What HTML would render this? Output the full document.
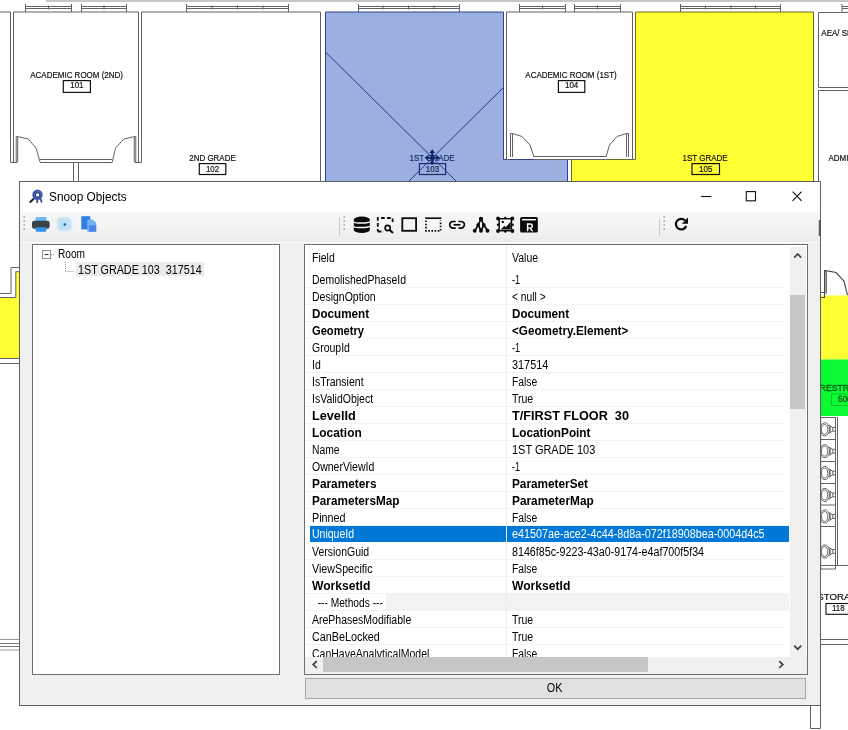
<!DOCTYPE html>
<html><head><meta charset="utf-8"><title>Snoop Objects</title>
<style>
html,body{margin:0;padding:0;background:#fff;}
body{width:848px;height:730px;position:relative;overflow:hidden;font-family:"Liberation Sans",sans-serif;}
#bg{position:absolute;left:0;top:0;will-change:transform;}
#dlg{position:absolute;left:19px;top:181px;width:800px;height:523px;border:1px solid #606060;background:#f0f0f0;}
#title{position:absolute;left:0;top:0;width:800px;height:30px;background:#fff;}
#title .t{position:absolute;left:28.6px;top:8.4px;font-size:12.6px;color:#000;white-space:nowrap;transform:scaleX(.94);transform-origin:0 0;}
#tb{position:absolute;left:0;top:29.8px;width:800px;height:30.6px;background:linear-gradient(#f6f6f6,#f4f4f4 45%,#ebebeb);border-bottom:1px solid #fbfbfb;}
#tree{position:absolute;left:12px;top:62px;width:246px;height:429px;border:1px solid #6f6f6f;background:#fff;}
#grid{position:absolute;left:284px;top:62px;width:502px;height:429px;border:1px solid #6f6f6f;background:#fff;overflow:hidden;}
.r{position:absolute;left:0;width:481px;height:16px;border-bottom:1px solid #f4f4f4;font-size:12px;color:#000;white-space:nowrap;}
.r span{position:absolute;top:0.6px;height:16px;line-height:16px;}
.r i{font-style:normal;display:inline-block;transform:scaleX(.875);transform-origin:0 50%;}
.r.b i{font-weight:bold;transform:scaleX(.975);}
.r .f{left:6.5px;} .r .v{left:206.7px;}
.r.sel{background:#0078d7;color:#fff;left:5px;width:478.6px;margin-top:-0.4px;border-bottom:0;}
.r.m b{position:absolute;left:80.5px;top:-0.6px;width:403px;height:17.4px;background:#f2f2f2;}
.r.sel .f{left:1.5px} .r.sel .v{left:201.7px}
#hdr{position:absolute;left:0;top:0;width:485px;height:25px;font-size:12px;}
#hdr span{position:absolute;top:5.2px;line-height:16px;}
#hdr i{font-style:normal;display:inline-block;transform:scaleX(.875);transform-origin:0 50%;}
#colsep{position:absolute;left:201px;top:0;width:1px;height:412px;background:#ececec;}
#vs{position:absolute;left:485px;top:1.5px;width:16px;height:410.5px;background:#f0f0f0;}
#vs .th{position:absolute;left:0.4px;top:48.3px;width:14.6px;height:114px;background:#c6c6c6;}
#hs{position:absolute;left:0;top:412px;width:502px;height:17px;background:#f0f0f0;}
#hs .th{position:absolute;left:18px;top:0.4px;width:325px;height:14.8px;background:#c6c6c6;}
#ok{position:absolute;left:285.1px;top:496.3px;width:499px;height:18.5px;border:1px solid #a8a8a8;background:#e1e1e1;font-size:12px;text-align:center;line-height:19px;}
#ok i{font-style:normal;display:inline-block;transform:scaleX(.9);position:relative;left:-1.4px;top:-0.3px}
svg.ic{position:absolute;overflow:visible;}
#tree .t{position:absolute;font-size:12px;white-space:nowrap;line-height:16px;}
#tree .t i{font-style:normal;display:inline-block;transform:scaleX(.885);transform-origin:0 50%;}
</style></head><body>
<svg id="bg" width="848" height="730" viewBox="0 0 848 730"><rect x="0" y="0" width="848" height="730" fill="#fff"/>
<rect x="46" y="0" width="802" height="2" fill="#c6c6c6"/>
<path d="M325.5 12H503.5V159.5H567.5V182H325.5Z" fill="#9bafe0" stroke="#2f4290" stroke-width="1"/>
<path d="M635.5 12H813.5V182H571.5V159.5H635.5Z" fill="#ffff33" stroke="#6b6b20" stroke-width="1"/>
<path d="M0 297.5H15.8V271.7H20V358H0Z" fill="#ffff33"/>
<rect x="820" y="295.5" width="28" height="64" fill="#ffff33"/>
<rect x="820" y="359.5" width="28" height="56.5" fill="#0cfa34"/>
<g fill="none" stroke="#626262" stroke-width="1">
<path d="M25.5 4V12M71.5 4V12M25.5 6.5H71.5M25.5 8.5H71.5M48.5 5.5V9.5" />
<path d="M81.5 4V12M126.5 4V12M81.5 6.5H126.5M81.5 8.5H126.5M104 5.5V9.5" />
<path d="M186.5 4V12M288.5 4V12M186.5 6.5H288.5M186.5 8.5H288.5M212 5.5V9.5M237.5 5.5V9.5M263 5.5V9.5" />
<path d="M358.5 4V12M459.5 4V12M358.5 6.5H459.5M358.5 8.5H459.5M383 5.5V9.5M408.5 5.5V9.5M434 5.5V9.5" />
<path d="M519.5 4V12M565.5 4V12M519.5 6.5H565.5M519.5 8.5H565.5M542.5 5.5V9.5" />
<path d="M574.5 4V12M620.5 4V12M574.5 6.5H620.5M574.5 8.5H620.5M597.5 5.5V9.5" />
<path d="M680.5 4V12M780.5 4V12M680.5 6.5H780.5M680.5 8.5H780.5M705.5 5.5V9.5M731 5.5V9.5M755.5 5.5V9.5" />
<path d="M842 4V12M860 4V12M842 6.5H860M842 8.5H860" />
<path d="M0 12H10.5V162.5H17"/>
<path d="M17 162.5H13.5V12H138.5V162.5H135"/>
<path d="M16.2 162.3V136.6H17.7V162.3"/>
<path d="M17.7 136.6L28.3 139L36.2 148.3L40 162"/>
<path d="M134.3 162.3V136.6H135.8V162.3"/>
<path d="M134.3 136.6L123.6 139.2L115.5 148.3L112.3 162"/>
<path d="M40 159.5H112.3M40 162.5H112.3M73.5 162.5V182M78.5 162.5V182"/>
<path d="M135 162.5H141.5V12H320.5V182"/>
<path d="M325.5 52L457 182M504 87L408 182" stroke="#1f3a93"/>
<path d="M510 159.5H506.5V12H632.5V159.5H629"/>
<path d="M534 156.5H606M534 159.5H606" />
<path d="M510.5 157V133.5H512.5V157M512.5 133.5L522 136.5L530 145L534 157"/>
<path d="M628.5 157V133.5H626.5V157M626.5 133.5L617 136.5L609.5 145L606 157"/>
<path d="M848 12.5H818.5V87.5H848M848 90.5H818.5V182"/>
<path d="M824.6 293.5V270.6H826.2V293.5M826.2 270.6L836 272.5L844 281L847.5 295M820.5 292.5H824.5V297.5H820.5" stroke="#4a4a4a" stroke-width="1.15"/>
<path d="M820.5 416.5V569M835.5 417V569M837.5 417V565.5M820.5 417.5H835.5M820.5 439.5H835.5M820.5 461.5H835.5M820.5 483.5H835.5M820.5 505H835.5M820.5 526.5H835.5M820.5 565.5H848M820.5 569H835.5"/>
<path d="M820.5 416.5V569" stroke="#333" stroke-width="1.3"/>
<g stroke="#555" stroke-width="0.9"><ellipse cx="824.8" cy="429.3" rx="4.7" ry="6.6"/><ellipse cx="824.6" cy="429.3" rx="3.2" ry="5"/><path d="M828.6 425.0L832.8 427.6M828.6 433.6L832.8 431.0M830.2 426.1V432.5M832.8 427.40000000000003H835.5M832.8 431.2H835.5M832.8 427.40000000000003V431.2"/></g>
<g stroke="#555" stroke-width="0.9"><ellipse cx="824.8" cy="451.2" rx="4.7" ry="6.6"/><ellipse cx="824.6" cy="451.2" rx="3.2" ry="5"/><path d="M828.6 446.9L832.8 449.5M828.6 455.5L832.8 452.9M830.2 448.0V454.4M832.8 449.3H835.5M832.8 453.09999999999997H835.5M832.8 449.3V453.09999999999997"/></g>
<g stroke="#555" stroke-width="0.9"><ellipse cx="824.8" cy="473" rx="4.7" ry="6.6"/><ellipse cx="824.6" cy="473" rx="3.2" ry="5"/><path d="M828.6 468.7L832.8 471.3M828.6 477.3L832.8 474.7M830.2 469.8V476.2M832.8 471.1H835.5M832.8 474.9H835.5M832.8 471.1V474.9"/></g>
<g stroke="#555" stroke-width="0.9"><ellipse cx="824.8" cy="494.9" rx="4.7" ry="6.6"/><ellipse cx="824.6" cy="494.9" rx="3.2" ry="5"/><path d="M828.6 490.59999999999997L832.8 493.2M828.6 499.2L832.8 496.59999999999997M830.2 491.7V498.09999999999997M832.8 493.0H835.5M832.8 496.79999999999995H835.5M832.8 493.0V496.79999999999995"/></g>
<g stroke="#555" stroke-width="0.9"><ellipse cx="824.8" cy="516.5" rx="4.7" ry="6.6"/><ellipse cx="824.6" cy="516.5" rx="3.2" ry="5"/><path d="M828.6 512.2L832.8 514.8M828.6 520.8L832.8 518.2M830.2 513.3V519.7M832.8 514.6H835.5M832.8 518.4H835.5M832.8 514.6V518.4"/></g>
<g stroke="#555" stroke-width="0.9"><ellipse cx="824.8" cy="551.5" rx="4.7" ry="6.6"/><ellipse cx="824.6" cy="551.5" rx="3.2" ry="5"/><path d="M828.6 547.2L832.8 549.8M828.6 555.8L832.8 553.2M830.2 548.3V554.7M832.8 549.6H835.5M832.8 553.4H835.5M832.8 549.6V553.4"/></g>
<path d="M820.5 569V705M820.5 639.5H848M820.5 644.5H848"/>
<path d="M810.5 705V728.5H820.5V705"/>
<path d="M0 639.5H19.5M0 650H19.5" stroke="#9a9a9a"/>
<path d="M0 643.5H19.5M0 646.5H19.5" stroke="#7a7a7a"/>
<path d="M20 267.5H11V293.5H0M20 271.7H15.8V297.5H0M0 358.5H20M0 363.5H20"/>
</g>
<g font-family="Liberation Sans, sans-serif" fill="#111" stroke="#111" stroke-width="0.18">
<text transform="translate(76.6 77.8) scale(.952 1)" font-size="8.4" text-anchor="middle">ACADEMIC ROOM (2ND)</text>
<rect x="63.3" y="80.6" width="27.10000000000001" height="11.800000000000011" fill="none" stroke="#111" stroke-width="1.2"/><text transform="translate(76.85 88.30000000000001) scale(.952 1)" font-size="8.4" text-anchor="middle" fill="#111">101</text>
<text transform="translate(212.5 160.8) scale(.952 1)" font-size="8.4" text-anchor="middle">2ND GRADE</text>
<rect x="199.3" y="163.6" width="26.5" height="10.900000000000006" fill="none" stroke="#111" stroke-width="1.2"/><text transform="translate(212.55 171.7) scale(.952 1)" font-size="8.4" text-anchor="middle" fill="#111">102</text>
<text transform="translate(432 160.8) scale(.952 1)" font-size="8.4" text-anchor="middle" fill="#1a2e6e" stroke="#1a2e6e">1ST GRADE</text>
<rect x="419.4" y="163.6" width="26.200000000000045" height="10.900000000000006" fill="none" stroke="#1a2e6e" stroke-width="1.2"/><text transform="translate(432.5 171.7) scale(.952 1)" font-size="8.4" text-anchor="middle" fill="#1a2e6e">103</text>
<text transform="translate(571 77.8) scale(.952 1)" font-size="8.4" text-anchor="middle">ACADEMIC ROOM (1ST)</text>
<rect x="558.4" y="80.6" width="26.399999999999977" height="11.800000000000011" fill="none" stroke="#111" stroke-width="1.2"/><text transform="translate(571.5999999999999 88.30000000000001) scale(.952 1)" font-size="8.4" text-anchor="middle" fill="#111">104</text>
<text transform="translate(705 160.8) scale(.952 1)" font-size="8.4" text-anchor="middle">1ST GRADE</text>
<rect x="692" y="163.6" width="27.5" height="10.900000000000006" fill="none" stroke="#111" stroke-width="1.2"/><text transform="translate(705.75 171.7) scale(.952 1)" font-size="8.4" text-anchor="middle" fill="#111">105</text>
<text transform="translate(821.3 36) scale(.952 1)" font-size="8.4">AEA/ SPECIAL</text>
<text transform="translate(828.5 160.8) scale(.952 1)" font-size="8.4">ADMIN</text>
<text transform="translate(819.6 390.7) scale(1.04 1)" font-size="8.4" fill="#055c14" stroke="#055c14" stroke-width="0.32">RESTROOM</text>
<rect x="831.5" y="394" width="30" height="11.2" fill="none" stroke="#055c14" stroke-width="0.32" stroke-width="1.1"/>
<text transform="translate(838.2 402.4) scale(.952 1)" font-size="8.4" fill="#055c14" stroke="#055c14" stroke-width="0.32">500</text>
<text transform="translate(817.3 600.4) scale(1.15 1)" font-size="8.4">STORAGE</text>
<rect x="826" y="603.5" width="30" height="10.8" fill="none" stroke="#111" stroke-width="1.1"/>
<text transform="translate(832 611.2) scale(.952 1)" font-size="8.4">118</text>
</g>
<g stroke="#0d2466" stroke-width="2.1" fill="#0d2466"><path d="M432.2 151.5V163.5M426.2 157.7H438.2" fill="none"/><path d="M432.2 149.3L429.4 153H435ZM432.2 165L429.8 162H434.6ZM424.6 157.7L427.8 155.2V160.2ZM439.8 157.7L436.6 155.2V160.2Z" stroke="none"/></g></svg>
<div id="dlg">
<div id="title"><span class="t">Snoop Objects</span>
<!--TITLEICONS-->
</div>
<div id="tb">
<!--TBICONS-->
</div>
<div id="tree">
<div class="sel2" style="position:absolute;left:42.8px;top:16.8px;width:128px;height:14.6px;background:#ebebeb;border-radius:1px"></div><span class="t" style="left:24.8px;top:1.1px"><i style="transform:scaleX(.845)">Room</i></span><span class="t" style="left:44.7px;top:16.9px"><i style="transform:scaleX(.897)">1ST GRADE 103&nbsp;&nbsp;317514</i></span>
</div>
<div id="grid">
<div id="hdr"><span style="left:6.6px"><i>Field</i></span><span style="left:206.7px"><i>Value</i></span></div>
<div class="r" style="top:26px"><span class="f"><i>DemolishedPhaseId</i></span><span class="v"><i style="transform:scaleX(0.76)">-1</i></span></div>
<div class="r" style="top:43px"><span class="f"><i>DesignOption</i></span><span class="v"><i style="transform:scaleX(0.854)">&lt; null &gt;</i></span></div>
<div class="r b" style="top:60px"><span class="f"><i style="transform:scaleX(0.973)">Document</i></span><span class="v"><i style="transform:scaleX(0.973)">Document</i></span></div>
<div class="r b" style="top:77px"><span class="f"><i style="transform:scaleX(0.927)">Geometry</i></span><span class="v"><i style="transform:scaleX(0.976)">&lt;Geometry.Element&gt;</i></span></div>
<div class="r" style="top:94px"><span class="f"><i>GroupId</i></span><span class="v"><i style="transform:scaleX(0.76)">-1</i></span></div>
<div class="r" style="top:111px"><span class="f"><i>Id</i></span><span class="v"><i style="transform:scaleX(0.906)">317514</i></span></div>
<div class="r" style="top:128px"><span class="f"><i>IsTransient</i></span><span class="v"><i style="transform:scaleX(0.86)">False</i></span></div>
<div class="r" style="top:145px"><span class="f"><i>IsValidObject</i></span><span class="v"><i>True</i></span></div>
<div class="r b" style="top:162px"><span class="f"><i style="transform:scaleX(1.057)">LevelId</i></span><span class="v"><i style="transform:scaleX(1.057)">T/FIRST FLOOR&nbsp;&nbsp;30</i></span></div>
<div class="r b" style="top:179px"><span class="f"><i style="transform:scaleX(0.994)">Location</i></span><span class="v"><i style="transform:scaleX(0.981)">LocationPoint</i></span></div>
<div class="r" style="top:196px"><span class="f"><i style="transform:scaleX(0.858)">Name</i></span><span class="v"><i style="transform:scaleX(0.913)">1ST GRADE 103</i></span></div>
<div class="r" style="top:213px"><span class="f"><i>OwnerViewId</i></span><span class="v"><i style="transform:scaleX(0.76)">-1</i></span></div>
<div class="r b" style="top:230px"><span class="f"><i style="transform:scaleX(0.986)">Parameters</i></span><span class="v"><i style="transform:scaleX(0.982)">ParameterSet</i></span></div>
<div class="r b" style="top:247px"><span class="f"><i style="transform:scaleX(0.978)">ParametersMap</i></span><span class="v"><i style="transform:scaleX(0.988)">ParameterMap</i></span></div>
<div class="r" style="top:264px"><span class="f"><i style="transform:scaleX(0.898)">Pinned</i></span><span class="v"><i style="transform:scaleX(0.86)">False</i></span></div>
<div class="r sel" style="top:281px"><span class="f"><i>UniqueId</i></span><span class="v"><i style="transform:scaleX(0.897)">e41507ae-ace2-4c44-8d8a-072f18908bea-0004d4c5</i></span></div>
<div class="r" style="top:298px"><span class="f"><i>VersionGuid</i></span><span class="v"><i style="transform:scaleX(0.891)">8146f85c-9223-43a0-9174-e4af700f5f34</i></span></div>
<div class="r" style="top:315px"><span class="f"><i style="transform:scaleX(0.892)">ViewSpecific</i></span><span class="v"><i style="transform:scaleX(0.86)">False</i></span></div>
<div class="r b" style="top:332px"><span class="f"><i style="transform:scaleX(1.01)">WorksetId</i></span><span class="v"><i style="transform:scaleX(1.01)">WorksetId</i></span></div>
<div class="r m" style="top:349px"><b></b><span class="f"><i style="transform:scaleX(0.85)">&nbsp;&nbsp;--- Methods ---</i></span><span class="v"><i></i></span></div>
<div class="r" style="top:366px"><span class="f"><i>ArePhasesModifiable</i></span><span class="v"><i>True</i></span></div>
<div class="r" style="top:383px"><span class="f"><i style="transform:scaleX(0.9)">CanBeLocked</i></span><span class="v"><i>True</i></span></div>
<div class="r" style="top:400px"><span class="f"><i>CanHaveAnalyticalModel</i></span><span class="v"><i style="transform:scaleX(0.86)">False</i></span></div>
<div id="colsep"></div>
<div id="vs"><div class="th"></div><!--VSARROWS--></div>
<div id="hs"><div class="th"></div><!--HSARROWS--></div>
</div>
<div id="ok"><i>OK</i></div>
<svg class="ic" style="left:-20px;top:-182px" width="848" height="730" viewBox="0 0 848 730"><defs><filter id="bl" x="-20%" y="-20%" width="140%" height="140%"><feGaussianBlur stdDeviation="1.1"/></filter></defs><g fill="none" stroke-linecap="round"><path d="M34 198.4L30.3 201.9" stroke="#1a2238" stroke-width="2"/><path d="M37.2 198.6V202.2M40.4 198.6L41.6 201.8" stroke="#2f4174" stroke-width="1.7"/><circle cx="37.5" cy="194.8" r="3.7" stroke="#4260b3" stroke-width="3.1" fill="#fff"/><circle cx="37.6" cy="194.9" r="2.3" stroke="#2c4186" stroke-width="1.3" fill="#fff"/></g>
<g fill="none" stroke="#111" stroke-width="1.1"><path d="M701 196.5H711.3"/><rect x="746.3" y="191.6" width="9.2" height="9.2"/><path d="M792.6 191.6L801.6 200.8M801.6 191.6L792.6 200.8"/></g>
<rect x="24.6" y="217.6" width="1.6" height="1.6" fill="#fff"/><rect x="23.4" y="216.4" width="1.7" height="1.7" fill="#a9a9a9"/><rect x="24.6" y="221.6" width="1.6" height="1.6" fill="#fff"/><rect x="23.4" y="220.4" width="1.7" height="1.7" fill="#a9a9a9"/><rect x="24.6" y="225.6" width="1.6" height="1.6" fill="#fff"/><rect x="23.4" y="224.4" width="1.7" height="1.7" fill="#a9a9a9"/><rect x="24.6" y="229.6" width="1.6" height="1.6" fill="#fff"/><rect x="23.4" y="228.4" width="1.7" height="1.7" fill="#a9a9a9"/><rect x="344.6" y="217.6" width="1.6" height="1.6" fill="#fff"/><rect x="343.4" y="216.4" width="1.7" height="1.7" fill="#a9a9a9"/><rect x="344.6" y="221.6" width="1.6" height="1.6" fill="#fff"/><rect x="343.4" y="220.4" width="1.7" height="1.7" fill="#a9a9a9"/><rect x="344.6" y="225.6" width="1.6" height="1.6" fill="#fff"/><rect x="343.4" y="224.4" width="1.7" height="1.7" fill="#a9a9a9"/><rect x="344.6" y="229.6" width="1.6" height="1.6" fill="#fff"/><rect x="343.4" y="228.4" width="1.7" height="1.7" fill="#a9a9a9"/><rect x="664.6" y="217.6" width="1.6" height="1.6" fill="#fff"/><rect x="663.4" y="216.4" width="1.7" height="1.7" fill="#a9a9a9"/><rect x="664.6" y="221.6" width="1.6" height="1.6" fill="#fff"/><rect x="663.4" y="220.4" width="1.7" height="1.7" fill="#a9a9a9"/><rect x="664.6" y="225.6" width="1.6" height="1.6" fill="#fff"/><rect x="663.4" y="224.4" width="1.7" height="1.7" fill="#a9a9a9"/><rect x="664.6" y="229.6" width="1.6" height="1.6" fill="#fff"/><rect x="663.4" y="228.4" width="1.7" height="1.7" fill="#a9a9a9"/>
<path d="M339.5 217.5V236M659.5 219V236" stroke="#c9c9c9" stroke-width="1" fill="none"/>
<rect x="35.6" y="217" width="10.8" height="5" rx="1" fill="#6cb9f6"/><rect x="32" y="220.8" width="17.6" height="8" rx="2.2" fill="#3b4149"/><path d="M35.6 227.3H46.4V230.3a1.5 1.5 0 0 1 -1.5 1.5H37.1a1.5 1.5 0 0 1 -1.5 -1.5Z" fill="#2f92ee"/>
<rect x="57.3" y="217.6" width="14.2" height="13.2" rx="3.5" fill="#bfe0f6" filter="url(#bl)"/><circle cx="64.8" cy="224.5" r="1.3" fill="#1f5f7a"/>
<path d="M81.3 216.2H90.3V229.4H81.3Z" fill="#2f7fe3"/><path d="M87.3 219.4H92.5L96.2 223V231.7H87.3Z" fill="#73b0f4"/><path d="M89 225.5H96.2V231.7H89Z" fill="#4f86e6"/>
<path d="M353.8 219.5V229.9A8 3 0 0 0 369.8 229.9V219.5A8 3 0 0 0 353.8 219.5Z" fill="#0a0a0a"/><path d="M353.2 221.2A8.6 1.9 0 0 0 370.4 221.2M353.2 225.7A8.6 1.9 0 0 0 370.4 225.7" fill="none" stroke="#f6f6f6" stroke-width="1.45"/>
<g fill="none" stroke="#0a0a0a" stroke-width="1.8"><path d="M377.8 231.5V218H392.6V224" stroke-dasharray="3.6 2.4" stroke-dashoffset="1.2"/><path d="M377.8 231.5H384" stroke-dasharray="3.6 2.4"/><circle cx="387.7" cy="228" r="2.6" stroke-width="1.6"/><path d="M389.8 230.1L393 233" stroke-width="2"/></g>
<rect x="402.3" y="218.2" width="13.8" height="12.6" fill="none" stroke="#0a0a0a" stroke-width="1.8"/>
<g fill="none" stroke="#0a0a0a"><path d="M425.2 218.2H441.4" stroke-width="1.6"/><path d="M426 220.5V230.8H440.6V220.5" stroke-width="1.7" stroke-dasharray="1.6 1.55"/></g>
<g fill="none" stroke="#0a0a0a" stroke-width="1.7"><path d="M455.7 221.5H453a3.3 3.3 0 0 0 0 6.6H455.7M458.4 221.5H461.1a3.3 3.3 0 0 1 0 6.6H458.4"/><path d="M453.6 224.8H460.5"/></g>
<g fill="#0a0a0a" stroke="#0a0a0a" stroke-width="1.7" stroke-linejoin="round"><path d="M474.8 230.8L478.2 224.8L481 219L483.8 224.8L487.6 230.8M478.2 224.8L481 230.8L483.8 224.8" fill="none"/><circle cx="481" cy="218.9" r="1.3"/><circle cx="478.2" cy="224.8" r="1"/><circle cx="483.8" cy="224.8" r="1"/><circle cx="474.7" cy="230.7" r="1.1"/><circle cx="481" cy="230.7" r="1.1"/><circle cx="487.5" cy="230.7" r="1.1"/></g>
<g fill="#0a0a0a"><rect x="499.2" y="218.7" width="12.2" height="12" fill="#fff" stroke="#0a0a0a" stroke-width="1.5"/><circle cx="498" cy="218.5" r="1.9"/><circle cx="512.4" cy="218.5" r="1.9"/><circle cx="498" cy="231" r="1.9"/><circle cx="512.4" cy="231" r="1.9"/><circle cx="505.3" cy="218" r="1.2"/><circle cx="505.3" cy="231.5" r="1.2"/><circle cx="498" cy="224.8" r="1.2"/><circle cx="512.6" cy="224.8" r="1.2"/><path d="M500.6 229.6L504.4 225.8L505.8 227.2L510.6 221.6V229.6Z"/><circle cx="502.8" cy="222" r="1.2"/></g>
<rect x="520.1" y="217" width="17.7" height="15.6" rx="1.6" fill="#0a0a0a"/><path d="M522 219.7H536" stroke="#fff" stroke-width="1.5"/><path d="M527.6 231.2V224H530.2a2.05 2.05 0 0 1 0 4.1H527.6M530 228.1L532.6 231.2" fill="none" stroke="#fff" stroke-width="1.45"/>
<g fill="none" stroke="#0a0a0a" stroke-width="2.2"><path d="M685 220.4A5.3 5.3 0 1 0 686.2 226"/></g><path d="M688 217.6V223.8H681.8Z" fill="#0a0a0a"/>
<rect x="42.5" y="250.5" width="8" height="8" fill="#fff" stroke="#8f8f8f" stroke-width="1"/><path d="M44.5 254.5H48.5" stroke="#333" stroke-width="1"/><path d="M51 254.5H55M65.5 262V271.5M65.5 271.5H74" stroke="#9a9a9a" stroke-width="1" stroke-dasharray="1 1" fill="none"/>
<g fill="none" stroke="#404040" stroke-width="1.7"><path d="M794.2 257.6L797.7 254L801.2 257.6"/><path d="M794.2 645.6L797.7 649.2L801.2 645.6"/><path d="M316.8 661.2L313.2 664.6L316.8 668"/><path d="M779.2 661.2L782.8 664.6L779.2 668"/></g>
<path d="M819.5 220V236" stroke="#555" stroke-width="1.4"/></svg>
</div>
</body></html>
